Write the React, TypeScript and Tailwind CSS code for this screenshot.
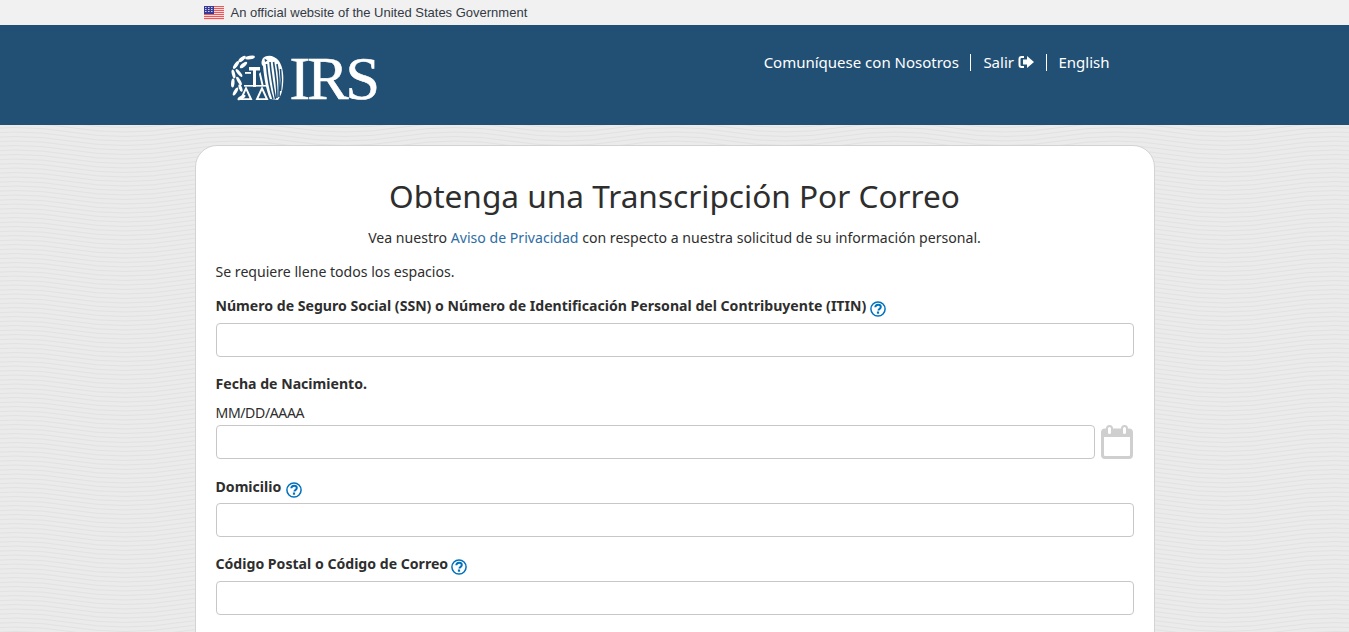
const bodyFont = "font-['Noto_Sans','Open_Sans',sans-serif]";

function Help() {
  return (
    <svg width="16" height="16" viewBox="0 0 16 16" className="inline-block shrink-0">
      <circle cx="8" cy="8" r="7.100" fill="#fff" stroke="#0071bc" strokeWidth="1.500" />
      <path d="M5.300 6.300C5.400 4.600 6.500 3.700 8.100 3.700c1.600 0 2.700.9 2.700 2.300 0 1.100-.7 1.600-1.400 2.100-.7.500-.9.800-.9 1.500" fill="none" stroke="#0071bc" strokeWidth="2" />
      <rect x="6.900" y="10.500" width="2.200" height="2.200" fill="#0071bc" />
    </svg>
  );
}

function Flag() {
  return (
    <svg width="20" height="15" viewBox="0 0 20 15">
      <rect x="0" y="1" width="20" height="14" fill="#f7dcdc" />
      {[0, 1, 2, 3, 4, 5, 6].map((i) => (
        <rect key={i} x="0" y={1 + i * 2} width="20" height="1" fill="#e8585c" />
      ))}
      <rect x="0" y="1" width="10" height="8" fill="#3a3a94" />
      {[2, 4, 6].map((y) => [2, 5, 8].map((x) => <rect key={`${x}-${y}`} x={x - 1} y={y} width="1.500" height="1" fill="#cfd0ee" />))}
    </svg>
  );
}

const leaves: [number, number, number, number, number][] = [
  [3.500, 20, 4.500, 1.600, 75],
  [2.800, 29, 4.500, 1.700, 95],
  [5.500, 37.500, 4.500, 1.700, 120],
  [11.500, 43.500, 4.500, 1.700, 150],
  [9, 19, 4.800, 1.600, 50],
  [9, 27, 4.800, 1.600, 60],
  [10.500, 34, 4, 1.600, 70],
  [6, 11, 4.500, 1.800, 125],
  [13.500, 11, 4.500, 1.800, -40],
  [12, 5, 4.500, 1.800, 140],
  [20, 3.500, 5, 1.800, 170],
];

function Seal() {
  return (
    <svg width="54" height="48" viewBox="0 0 54 48" fill="#fff">
      {leaves.map(([cx, cy, rx, ry, r], i) => (
        <ellipse key={i} cx={cx} cy={cy} rx={rx} ry={ry} transform={`rotate(${r} ${cx} ${cy})`} />
      ))}
      <path d="M33 4c5-4 12-2 16 3 4 6 5 15 4 24-.5 6-2 11-5 15l-8-1c-4-9-6-22-7-33-2-1-2-5 0-8z" />
      <g fill="none" stroke="#225075" strokeWidth="1.600">
        <path d="M36.500 10c1 12 3 25 6.500 35M40 8c1 12 3 24 5.500 37M43.500 8c2 12 3.500 24 3.500 36M47 10c2 10 2.500 22 2 33M50.500 15c1 8 1 15 0 22" />
      </g>
      <path d="M34.500 4.500l3 2-2.500 1.500z" fill="#225075" />
      <path d="M19 13h11v3.500h-4V33h-3V16.500h-4z" />
      <path d="M15 18h6v1.800h-6z" />
      <path d="M30.500 18l3 13-1.800.8-2.700-11.800z" />
      <path d="M14 31h23v1.600H14z" />
      <path fillRule="evenodd" d="M16 32l6.500 14h-13zM16 36.500L12.500 44.200h7z" />
      <path fillRule="evenodd" d="M32 32l6.500 14h-13zM32 36.500L28.500 44.200h7z" />
    </svg>
  );
}

function Waves() {
  const lines = [];
  for (let y = -12; y < 650; y += 4.500) {
    let d = `M-40 ${y} q 55 -9 110 0`;
    for (let x = 70; x < 1400; x += 110) d += " t 110 0";
    lines.push(<path key={y} d={d} />);
  }
  return (
    <svg width="1349" height="632" className="absolute inset-0" fill="none" stroke="#e2e2e2" strokeWidth="1">
      {lines}
    </svg>
  );
}

function Field({ mt = "" }: { mt?: string }) {
  return <input className={`block w-full h-[34px] rounded-[4px] border border-[#c7c7c7] bg-white ${mt}`} />;
}

function Label({ children, helpGap }: { children: React.ReactNode; helpGap?: string }) {
  return (
    <div className="flex items-center h-[22px] text-[14.1px] font-bold leading-[22px] text-[#2e2e2e]">
      <span>{children}</span>
      {helpGap && <span className={`${helpGap} flex`}><Help /></span>}
    </div>
  );
}

export default function App() {
  return (
    <div className={`relative h-[632px] overflow-hidden bg-[#ebebeb] ${bodyFont}`}>
      <Waves />
      <div className="relative h-[25px] bg-[#f1f1f1]">
        <div className="w-[960px] mx-auto pl-[9px] flex items-center h-full gap-[7px] font-['Liberation_Sans',sans-serif] text-[13px] text-[#333a45]">
          <Flag />
          <span>An official website of the United States Government</span>
        </div>
      </div>
      <header className="relative h-[100px] bg-[#225075]">
        <div className="w-[960px] mx-auto flex justify-between pl-[35px] pr-[45px]">
          <div className="flex items-center h-[48px] mt-[29px] gap-[6px] text-white">
            <Seal />
            <span className="font-['Liberation_Serif',serif] text-[62px] leading-none tracking-[-3px] [-webkit-text-stroke:0.6px_white]">IRS</span>
          </div>
          <nav className="flex items-center h-[20px] mt-[27px] text-[15px] text-white">
            <span>Comuníquese con Nosotros</span>
            <span className="w-[1.500px] h-[17px] bg-white ml-[11px] mr-[12px]" />
            <span>Salir</span>
            <svg width="17" height="14" viewBox="0 0 17 14" className="ml-[4px]" fill="#fff">
              <path d="M6 2H3.500C2.500 2 1.500 3 1.500 4v6c0 1 1 2 2 2H6" fill="none" stroke="#fff" strokeWidth="2" />
              <path d="M9 1l7 6-7 6V9.500H5v-5h4z" />
            </svg>
            <span className="w-[1.500px] h-[17px] bg-white mx-[11px]" />
            <span>English</span>
          </nav>
        </div>
      </header>
      <main className="relative w-[960px] mx-auto mt-[20px] px-[20px] pt-[29px] pb-[40px] bg-white rounded-[22px] border border-[#d3d3d3] text-[#2e2e2e]">
        <h1 className="text-center text-[31.6px] leading-[42px] text-[#2e2e2e]">Obtenga una Transcripción Por Correo</h1>
        <p className="text-center text-[14.1px] leading-[22px] mt-[10px]">
          Vea nuestro <span className="text-[#2e6da4]">Aviso de Privacidad</span> con respecto a nuestra solicitud de su información personal.
        </p>
        <p className="text-[14.1px] leading-[22px] mt-[12px]">Se requiere llene todos los espacios.</p>
        <div className="mt-[12px]">
          <Label helpGap="ml-[4px] mt-[6px]">Número de Seguro Social (SSN) o Número de Identificación Personal del Contribuyente (ITIN)</Label>
          <Field mt="mt-[6px]" />
        </div>
        <div className="mt-[16px]">
          <Label>Fecha de Nacimiento.</Label>
          <div className="text-[14.1px] tracking-[-0.4px] leading-[20px] mt-[8px]">MM/DD/AAAA</div>
          <div className="flex items-center gap-[6px] mt-[2px]">
            <Field />
            <svg width="33" height="34" viewBox="0 0 33 34" className="shrink-0">
              <rect x="1.500" y="5" width="29" height="27.500" rx="2.500" fill="#fff" stroke="#cfcfcf" strokeWidth="3" />
              <rect x="2" y="5" width="28" height="7" fill="#cfcfcf" />
              <rect x="6" y="1" width="5" height="9" rx="2.500" fill="#fff" stroke="#cfcfcf" strokeWidth="2" />
              <rect x="21" y="1" width="5" height="9" rx="2.500" fill="#fff" stroke="#cfcfcf" strokeWidth="2" />
            </svg>
          </div>
        </div>
        <div className="mt-[17px]">
          <Label helpGap="ml-[5px] mt-[5px]">Domicilio</Label>
          <Field mt="mt-[5px]" />
        </div>
        <div className="mt-[16px]">
          <Label helpGap="ml-[3px] mt-[5px]">Código Postal o Código de Correo</Label>
          <Field mt="mt-[6px]" />
        </div>
      </main>
    </div>
  );
}
